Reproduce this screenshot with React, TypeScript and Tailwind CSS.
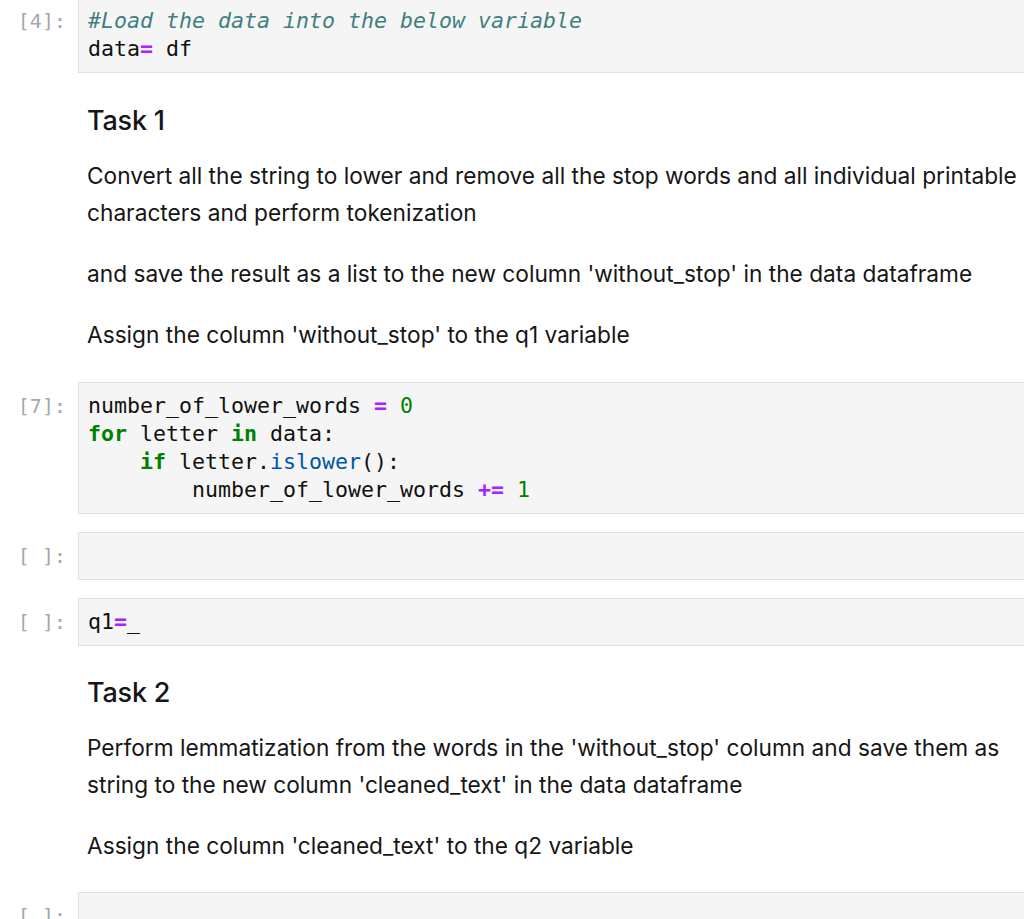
import React from 'react'

const mono = "font-['DejaVu_Sans_Mono',Menlo,monospace]"
const sans = "font-['Inter','Liberation_Sans',sans-serif]"

function Prompt({ label }: { label: string }) {
  return (
    <div
      className={`w-[78px] shrink-0 pr-[12px] pt-[10px] text-right text-[20px] leading-[28px] text-[#a8a8a8] whitespace-pre ${mono}`}
    >
      {label}
    </div>
  )
}

function CodeCell({
  label,
  children,
  className = '',
}: {
  label: string
  children?: React.ReactNode
  className?: string
}) {
  return (
    <div className={`flex ${className}`}>
      <Prompt label={label} />
      <div
        className={`flex-1 min-h-[48px] border border-r-0 border-[#e0e0e0] bg-[#f5f5f5] py-[9px] pl-[9px] text-[21.6px] leading-[28px] text-[#111] whitespace-pre ${mono}`}
      >
        {children}
      </div>
    </div>
  )
}

const Op = ({ children }: { children: React.ReactNode }) => (
  <span className="font-bold text-[#aa22ff]">{children}</span>
)
const Kw = ({ children }: { children: React.ReactNode }) => (
  <span className="font-bold text-[#008000]">{children}</span>
)
const Num = ({ children }: { children: React.ReactNode }) => (
  <span className="text-[#008000]">{children}</span>
)

function Markdown({
  title,
  paragraphs,
  className = '',
}: {
  title: string
  paragraphs: string[][]
  className?: string
}) {
  return (
    <div className={`pl-[87px] text-[#161616] ${sans} ${className}`}>
      <h2 className="text-[27px] leading-[36px] font-medium tracking-[-0.2px]">{title}</h2>
      <div className="mt-[18px] flex flex-col gap-[24px] text-[22.7px] leading-[37px]">
        {paragraphs.map((lines, i) => (
          <p key={i}>
            {lines.map((line, j) => (
              <span key={j} className="block whitespace-nowrap">
                {line}
              </span>
            ))}
          </p>
        ))}
      </div>
    </div>
  )
}

export default function App() {
  return (
    <div className="h-[919px] w-[1024px] overflow-hidden bg-white">
      <div className="-mt-[3px]">
        <CodeCell label="[4]:">
          <span className="italic text-[#408080]">#Load the data into the below variable</span>
          {'\n'}data<Op>=</Op> df
        </CodeCell>

        <Markdown
          className="mt-[30px]"
          title="Task 1"
          paragraphs={[
            [
              'Convert all the string to lower and remove all the stop words and all individual printable',
              'characters and perform tokenization',
            ],
            ["and save the result as a list to the new column 'without_stop' in the data dataframe"],
            ["Assign the column 'without_stop' to the q1 variable"],
          ]}
        />

        <CodeCell label="[7]:" className="mt-[29px]">
          number_of_lower_words <Op>=</Op> <Num>0</Num>
          {'\n'}
          <Kw>for</Kw> letter <Kw>in</Kw> data:
          {'\n    '}
          <Kw>if</Kw> letter.<span className="text-[#0055aa]">islower</span>():
          {'\n        '}number_of_lower_words <Op>+=</Op> <Num>1</Num>
        </CodeCell>

        <CodeCell label="[ ]:" className="mt-[18px]" />

        <CodeCell label="[ ]:" className="mt-[18px]">
          q1<Op>=</Op>_
        </CodeCell>

        <Markdown
          className="mt-[29px]"
          title="Task 2"
          paragraphs={[
            [
              "Perform lemmatization from the words in the 'without_stop' column and save them as",
              "string to the new column 'cleaned_text' in the data dataframe",
            ],
            ["Assign the column 'cleaned_text' to the q2 variable"],
          ]}
        />

        <CodeCell label="[ ]:" className="mt-[28px]" />
      </div>
    </div>
  )
}
